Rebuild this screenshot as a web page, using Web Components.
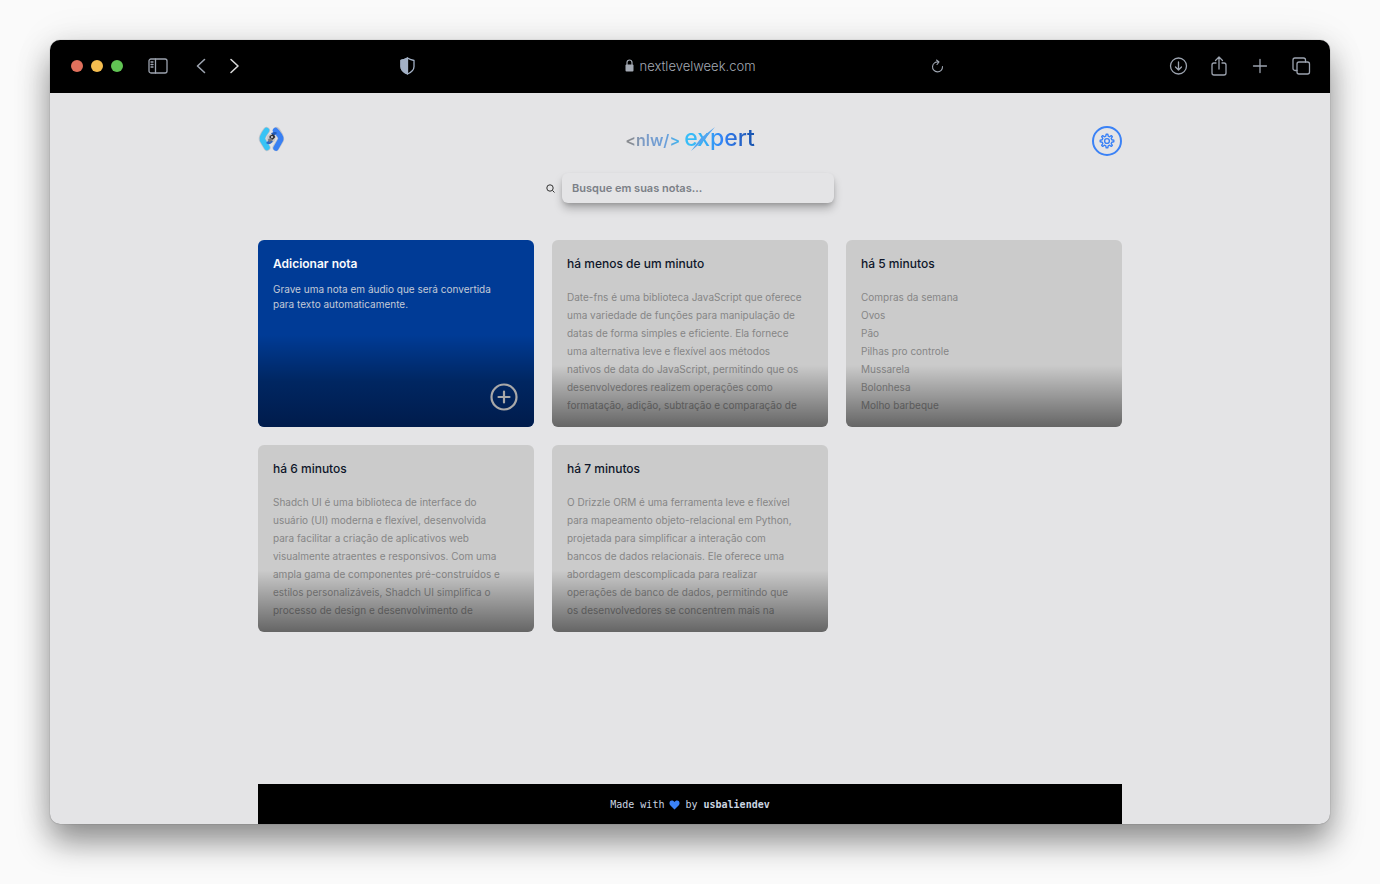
<!DOCTYPE html>
<html lang="pt-BR">
<head>
<meta charset="utf-8">
<meta name="viewport" content="width=device-width, initial-scale=1">
<title>NLW Expert Notes</title>
<style>
  body {
    margin: 0;
    background: #fafafa;
    font-family: Inter, "Liberation Sans", sans-serif;
    color: #0f172a;
  }
</style>
</head>
<body>
<browser-window>
  <browser-toolbar slot="toolbar">nextlevelweek.com</browser-toolbar>
  <notes-header></notes-header>
  <notes-search></notes-search>
  <notes-grid>
    <note-card variant="add"><span slot="title">Adicionar nota</span>Grave uma nota em áudio que será convertida<br>para texto automaticamente.</note-card>
    <note-card><span slot="title">há menos de um minuto</span>Date-fns é uma biblioteca JavaScript que oferece<br>uma variedade de funções para manipulação de<br>datas de forma simples e eficiente. Ela fornece<br>uma alternativa leve e flexível aos métodos<br>nativos de data do JavaScript, permitindo que os<br>desenvolvedores realizem operações como<br>formatação, adição, subtração e comparação de</note-card>
    <note-card><span slot="title">há 5 minutos</span>Compras da semana<br>Ovos<br>Pão<br>Pilhas pro controle<br>Mussarela<br>Bolonhesa<br>Molho barbeque</note-card>
    <note-card><span slot="title">há 6 minutos</span>Shadch UI é uma biblioteca de interface do<br>usuário (UI) moderna e flexível, desenvolvida<br>para facilitar a criação de aplicativos web<br>visualmente atraentes e responsivos. Com uma<br>ampla gama de componentes pré-construídos e<br>estilos personalizáveis, Shadch UI simplifica o<br>processo de design e desenvolvimento de</note-card>
    <note-card><span slot="title">há 7 minutos</span>O Drizzle ORM é uma ferramenta leve e flexível<br>para mapeamento objeto-relacional em Python,<br>projetada para simplificar a interação com<br>bancos de dados relacionais. Ele oferece uma<br>abordagem descomplicada para realizar<br>operações de banco de dados, permitindo que<br>os desenvolvedores se concentrem mais na</note-card>
  </notes-grid>
  <notes-footer slot="footer"></notes-footer>
</browser-window>

<script>
const define = (name, html) => customElements.define(name, class extends HTMLElement {
  constructor() {
    super();
    this.attachShadow({ mode: 'open' }).innerHTML = html;
  }
});

define('browser-window', `
<style>
  :host {
    display: flex;
    box-sizing: border-box;
    min-height: 100vh;
    padding: 40px 50px 60px;
  }
  .window {
    flex: 1;
    min-width: 0;
    display: flex;
    flex-direction: column;
    border-radius: 10px;
    overflow: hidden;
    background: #e4e4e6;
    box-shadow: 0 0 1px rgba(0,0,0,.5), 0 18px 32px rgba(0,0,0,.42), 0 0 40px rgba(0,0,0,.08);
  }
  .page {
    flex: 1;
    display: flex;
    flex-direction: column;
    box-sizing: border-box;
    width: 100%;
    max-width: 864px;
    margin: 0 auto;
    padding-top: 33px;
  }
  main { flex: 1; padding-bottom: 36px; }
</style>
<div class="window">
  <slot name="toolbar"></slot>
  <div class="page">
    <main><slot></slot></main>
    <slot name="footer"></slot>
  </div>
</div>`);

define('browser-toolbar', `
<style>
  :host {
    display: grid;
    grid-template-columns: 1fr auto 1fr;
    align-items: center;
    height: 51px;
    padding: 0 19px 2px 20px;
    background: #000;
    color: #9ca3af;
    font-size: 13px;
    font-weight: 300;
  }
  .side, .lights, .nav, .tools, .url { display: flex; align-items: center; }
  .side { justify-content: space-between; }
  .lights { gap: 8px; margin-right: 13px; padding-left: 1px; }
  .lights i { width: 12px; height: 12px; border-radius: 50%; }
  .nav { gap: 12px; }
  .nav .panel { margin-right: 12px; }
  .tools { gap: 21px; }
  .shield { margin-right: 210px; }
  .reload { margin-left: 175px; }
  .url { gap: 5px; color: #a4aab4; }
  button {
    display: flex;
    padding: 0;
    border: 0;
    background: none;
    color: inherit;
  }
  svg { display: block; fill: none; stroke: currentColor; stroke-linecap: round; stroke-linejoin: round; }
</style>
<div class="side">
  <div class="nav">
    <div class="lights"><i style="background:#e0705c"></i><i style="background:#f5bd4f"></i><i style="background:#61c554"></i></div>
    <button class="panel" aria-label="Barra lateral"><svg width="20" height="16" stroke-width="1.3"><rect x="1" y="1" width="18" height="14" rx="2"/><path d="M7.5 1v14M3 4h2M3 6.500h2M3 9h2"/></svg></button>
    <button aria-label="Voltar"><svg width="20" height="16" stroke-width="1.600"><path d="M12.500 1.500 5.500 8l7 6.500"/></svg></button>
    <button aria-label="Avançar" style="color:#d6d6d6"><svg width="20" height="16" stroke-width="1.600"><path d="m7 1.500 7 6.500-7 6.500"/></svg></button>
  </div>
  <button class="shield" aria-label="Privacidade" style="color:#a3b1c6"><svg width="15" height="18" stroke-width="1.300"><path d="M7.500 1C5.500 2.500 3.500 3 1 3.500v6c0 3.500 3 6 6.500 7.500 3.500-1.500 6.500-4 6.500-7.500v-6C11.500 3 9.500 2.500 7.500 1Z"/><path d="M7.500 1C5.500 2.500 3.500 3 1 3.500v6c0 3.500 3 6 6.500 7.500Z" fill="currentColor"/></svg></button>
</div>
<div class="url">
  <svg width="9" height="13" stroke-width="1.200"><path d="M2 6V3.500a2.500 2.500 0 0 1 5 0V6"/><rect x=".5" y="5.500" width="8" height="7" rx="1" fill="currentColor" stroke="none"/></svg>
  <span><slot></slot></span>
</div>
<div class="side">
  <button class="reload" aria-label="Recarregar"><svg width="13" height="14" stroke-width="1.100"><path d="M7.500 3A5 5 0 1 0 11.500 7.500M5.500 1 8 3 6 5.500"/></svg></button>
  <div class="tools">
    <button aria-label="Downloads"><svg width="19" height="18" stroke-width="1.300"><circle cx="9.500" cy="9" r="8"/><path d="M9.500 5v8M6.500 10l3 3 3-3"/></svg></button>
    <button aria-label="Compartilhar"><svg width="20" height="20" stroke-width="1.300"><path d="M7 7H5a2 2 0 0 0-2 2v8a2 2 0 0 0 2 2h10a2 2 0 0 0 2-2V9a2 2 0 0 0-2-2h-2M10 13V1.500M6.500 4.500l3.500-3.500 3.500 3.500"/></svg></button>
    <button aria-label="Nova aba"><svg width="20" height="18" stroke-width="1.300"><path d="M10 2.500v13M3.500 9h13"/></svg></button>
    <button aria-label="Abas"><svg width="20" height="18" stroke-width="1.300"><rect x="6" y="5" width="12.500" height="12" rx="2"/><path d="M6 13.500H4a2 2 0 0 1-2-2V3a2 2 0 0 1 2-2h8.500a2 2 0 0 1 2 2v2"/></svg></button>
  </div>
</div>`);

define('notes-header', `
<style>
  :host {
    display: grid;
    grid-template-columns: 1fr auto 1fr;
    align-items: start;
    height: 30px;
  }
  svg { display: block; }
  .brand {
    display: flex;
    align-items: baseline;
    gap: 4px;
    margin: 0;
    line-height: 24px;
    white-space: nowrap;
    position: relative;
  }
  .nlw, .expert { color: transparent; -webkit-background-clip: text; background-clip: text; }
  .nlw {
    font: 600 16px/24px Inter, sans-serif;
    background-image: linear-gradient(90deg, #888b90 10%, #7c9cc8 35%, #6a9fdb 75%, #3eb5ee);
  }
  .expert {
    font: 500 23px/24px Inter, sans-serif;
    background-image: linear-gradient(90deg, #38bdf8 8%, #35adf5 30%, #3282f6 55%, #2563c8 80%, #1552ad);
  }
  .swoosh { position: absolute; right: 40px; top: 1px; }
  button {
    justify-self: end;
    box-sizing: border-box;
    width: 30px;
    height: 30px;
    padding: 0;
    display: grid;
    place-items: center;
    border: 2px solid #3b82f6;
    border-radius: 50%;
    background: none;
    color: #3b82f6;
  }
</style>
<svg width="27" height="27" viewBox="0 0 27 27" aria-label="Rocketseat">
  <g fill="none" stroke="#c2c4ca" stroke-width="7" stroke-linecap="round" stroke-linejoin="round"><path d="M8.500 4.500Q3 11.500 4.500 14L9 21.500M18.500 4.500Q23.500 11 22.500 14L18 21.500"/></g>
  <circle cx="13" cy="12.500" r="4.500" fill="#c9c9cd"/>
  <path d="M8.500 4.500Q3.500 11 4.500 14L9 21.500" fill="none" stroke="#38c3f5" stroke-width="5.500" stroke-linecap="round" stroke-linejoin="round"/>
  <path d="M17.500 4.500Q24 11 22.500 14L18 22" fill="none" stroke="#3980f3" stroke-width="5.500" stroke-linecap="round" stroke-linejoin="round"/>
  <path d="M13 7.500c2-2 5-2 6-.5l-3 3Z" fill="#245bb8"/>
  <path d="M8 17c2 2 5 1.500 7-2l-4-1Z" fill="#2e66c4"/>
  <path d="M11.500 10 15 8l2.500 3-3 3-3-2Z" fill="#303136"/>
  <path d="m10 13 3-1 2 2-4 2.500Z" fill="#77787d"/>
  <circle cx="14" cy="11" r="1" fill="#dedee2"/>
</svg>
<h1 class="brand">
  <span class="nlw">&lt;nlw/&gt;</span><span class="expert">expert</span>
  <svg class="swoosh" width="24" height="24"><path d="m0 24 10-13L24 0 13 13Z" fill="#54a5ef"/></svg>
</h1>
<button aria-label="Configurações">
  <svg width="16" height="16" viewBox="0 0 16 16" fill="none" stroke="currentColor" stroke-width="1.400" stroke-linejoin="round">
    <path d="m6.800 3.200.4-2h1.600l.4 2 1.400.6 1.700-1.200 1.100 1.100-1.200 1.700.6 1.400 2 .4v1.600l-2 .4-.6 1.400 1.200 1.700-1.100 1.100-1.700-1.200-1.400.6-.4 2H7.200l-.4-2-1.400-.6-1.700 1.200-1.100-1.100 1.200-1.700-.6-1.400-2-.4V7.200l2-.4.6-1.400-1.200-1.700 1.100-1.100 1.700 1.200Z"/>
    <circle cx="8" cy="8" r="2.400"/>
  </svg>
</button>`);

define('notes-search', `
<style>
  :host { display: block; margin: 17px 0 37px; }
  form { display: flex; justify-content: center; align-items: center; gap: 7px; }
  label { display: flex; }
  input {
    box-sizing: border-box;
    width: 272px;
    height: 30px;
    padding: 0 10px;
    border: 0;
    border-radius: 6px;
    background: #e4e4e6;
    box-shadow: 0 6px 10px -1px rgba(0,0,0,.28), 0 2px 4px -1px rgba(0,0,0,.15);
    font: 600 11px/18px Inter, sans-serif;
    color: #1f2937;
    outline: none;
  }
  input::placeholder { color: #7b8087; opacity: 1; }
</style>
<form>
  <label for="q" aria-label="Buscar"><svg width="9" height="9" fill="none" stroke="#333" stroke-width="1"><circle cx="4" cy="4" r="3.200"/><path d="m6.500 6.500 2 2"/></svg></label>
  <input id="q" type="text" placeholder="Busque em suas notas...">
</form>`);

define('notes-grid', `
<style>
  :host {
    display: grid;
    grid-template-columns: repeat(auto-fill, minmax(260px, 1fr));
    grid-auto-rows: 187px;
    gap: 18px;
  }
</style>
<slot></slot>`);

define('note-card', `
<style>
  :host { display: grid; min-width: 0; }
  button {
    position: relative;
    display: flex;
    flex-direction: column;
    justify-content: flex-start;
    gap: 15px;
    min-width: 0;
    padding: 15px;
    border: 0;
    border-radius: 6px;
    overflow: hidden;
    background: #cbcbcb;
    color: #868686;
    font: 400 10px/18px Inter, sans-serif;
    text-align: left;
  }
  .title { font-size: 12px; font-weight: 500; color: #0f172a; }
  .text { display: block; max-height: 126px; overflow: hidden; }
  .shade {
    position: absolute;
    inset: auto 0 0;
    height: 62px;
    background: linear-gradient(transparent, rgba(0,0,0,.5));
  }
  .plus { display: none; position: absolute; right: 15px; bottom: 15px; }
  :host([variant="add"]) button { background: #003b96; color: #c3cad6; line-height: 15px; gap: 9px; }
  :host([variant="add"]) .title { color: #f8fafc; font-weight: 600; line-height: 18px; }
  :host([variant="add"]) .shade { height: 92px; background: linear-gradient(transparent, rgba(0,0,0,.35) 50%, rgba(0,8,30,.62)); }
  :host([variant="add"]) .plus { display: block; }
</style>
<button type="button">
  <span class="title"><slot name="title"></slot></span>
  <span class="text"><slot></slot></span>
  <span class="shade"></span>
  <svg class="plus" width="30" height="30" fill="none" stroke="#a8a8a8" stroke-width="2.200" stroke-linecap="round"><circle cx="15" cy="15" r="12.500"/><path d="M15 9.500v11M9.500 15h11"/></svg>
</button>`);

define('notes-footer', `
<style>
  :host { display: block; }
  footer {
    display: flex;
    justify-content: center;
    align-items: center;
    gap: 5px;
    height: 38px;
    padding-top: 2px;
    background: #000;
    color: #cbd5e1;
    font: 400 10px/16px "DejaVu Sans Mono", monospace;
  }
  a { color: inherit; font-weight: 700; text-decoration: none; }
</style>
<footer>
  <span>Made with</span>
  <svg width="11" height="10" viewBox="0 0 11 10" fill="#3b82f6"><path d="M5.500 9.500 1.200 5.200C-.2 3.600.4.500 2.800.500c1.300 0 2.200.7 2.700 1.500C6 1.200 6.900.5 8.200.500c2.400 0 3 3.100 1.600 4.700Z"/></svg>
  <span>by <a href="#usbaliendev">usbaliendev</a></span>
</footer>`);
</script>
</body>
</html>
